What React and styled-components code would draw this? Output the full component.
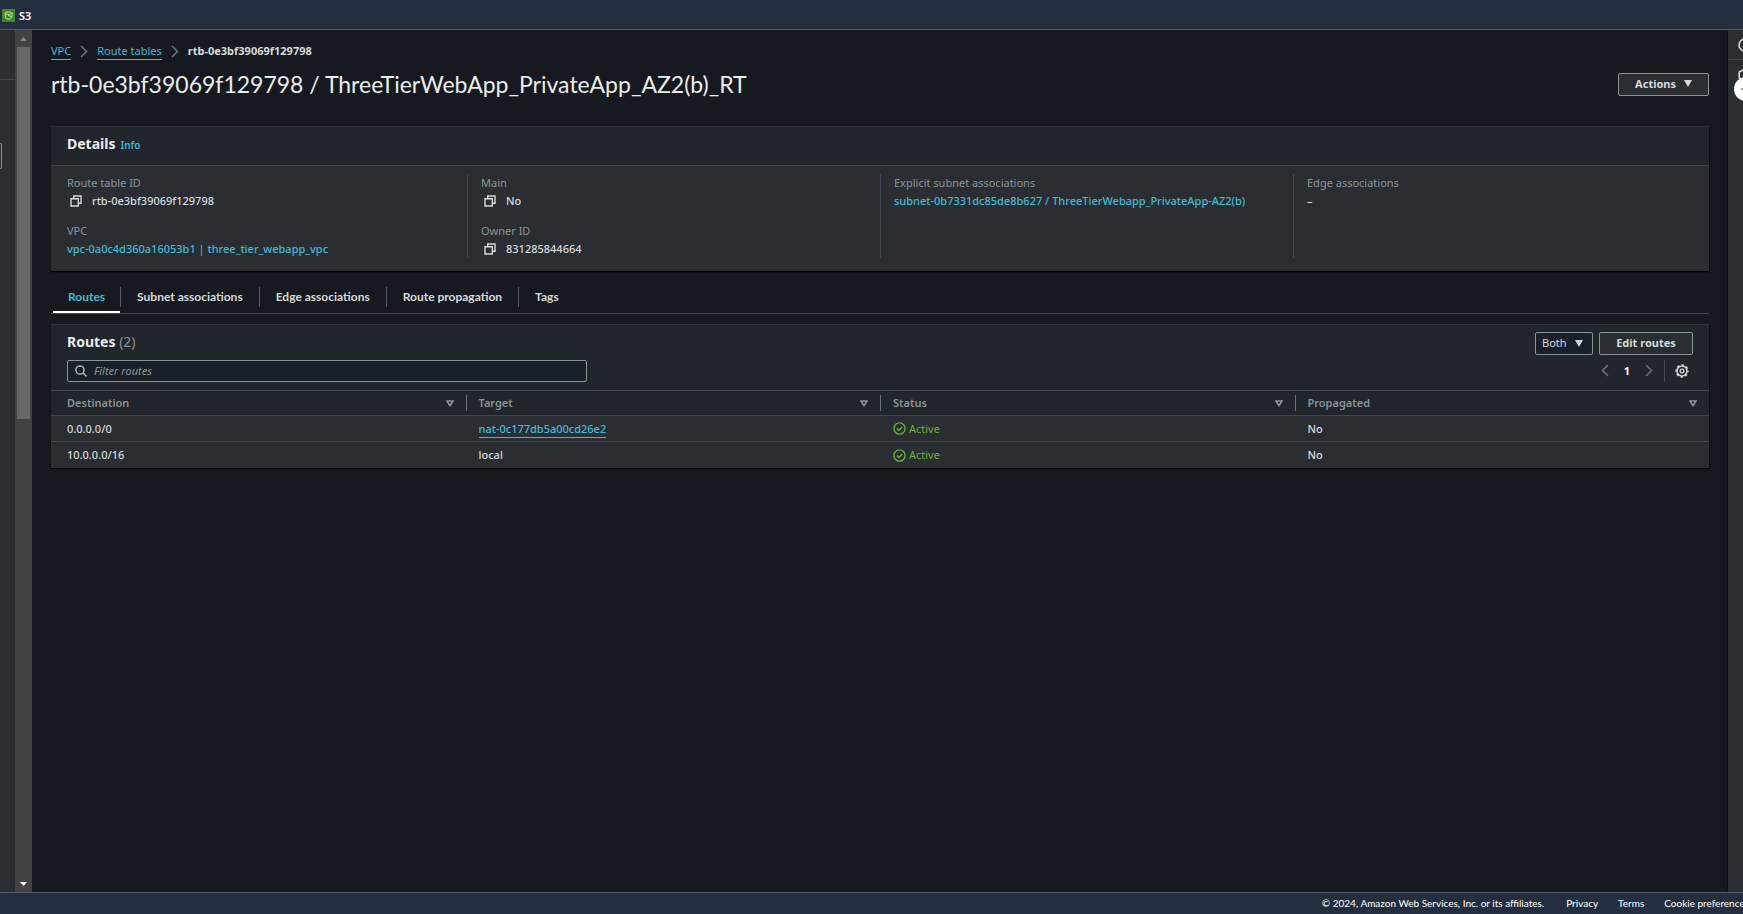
import React from 'react';
import styled, { createGlobalStyle, css } from 'styled-components';

const c = {
  bar: '#232f3e',
  barLine: '#545b64',
  page: '#16191f',
  head: '#21252c',
  body: '#2a2e33',
  line: '#414750',
  text: '#d5dbdb',
  strong: '#eaeded',
  muted: '#879596',
  link: '#44b9d6',
  green: '#6aaf35',
  field: '#1a2029',
};

const Global = createGlobalStyle`
  *, *::before, *::after { box-sizing: border-box; }
  body { margin: 0; background: ${c.page}; }
  body, button, input, select {
    font: 400 11px/18px 'Noto Sans', 'Open Sans', sans-serif;
    color: ${c.text};
  }
  button, h1, h2, dl, dd, dt, ul, ol { margin: 0; padding: 0; }
  button { cursor: pointer; }
  ul, ol { list-style: none; }
  svg { display: block; flex: none; }
`;

const Page = styled.div`
  display: flex;
  flex-direction: column;
  min-height: 100vh;
  overflow: hidden;
`;

const TopBar = styled.header`
  display: flex;
  align-items: center;
  height: 30px;
  padding: 2px 2px 0;
  background: ${c.bar};
  border-bottom: 1px solid ${c.barLine};
`;

const Favorite = styled.a`
  display: flex;
  align-items: center;
  gap: 4px;
  color: #fff;
  font-weight: 600;
  text-decoration: none;
`;

const Workspace = styled.div`
  display: flex;
  flex: 1;
`;

const SideNav = styled.nav`
  display: flex;
  flex-direction: column;
  align-items: flex-start;
  width: 15px;
  background: ${c.body};
`;

const SideNavHead = styled.div`
  width: 100%;
  height: 50px;
  border-bottom: 1px solid ${c.line};
`;

const SideNavField = styled.div`
  width: 2px;
  height: 26px;
  margin-top: 63px;
  border: solid ${c.muted};
  border-width: 1px 1px 1px 0;
  border-radius: 0 2px 2px 0;
`;

const ScrollTrack = styled.div`
  display: flex;
  flex-direction: column;
  align-items: center;
  width: 17px;
  background: #424242;
`;

const ScrollArrow = styled.span`
  display: flex;
  align-items: center;
  justify-content: center;
  height: 17px;
  color: ${(p) => (p.$active ? '#fff' : '#868686')};
`;

const ScrollThumb = styled.div`
  width: 13px;
  height: 372px;
  margin-bottom: auto;
  background: #686868;
`;

const Main = styled.main`
  flex: 1;
  min-width: 0;
  padding: 12px 18px 0 19px;
  border-right: 1px solid #0f1114;
`;

const Crumbs = styled.ol`
  display: flex;
  align-items: center;
  gap: 9px;
`;

const Crumb = styled.li`
  display: flex;
  align-items: center;
  gap: 9px;
  color: ${c.muted};
`;

const CrumbCurrent = styled.span`
  color: ${c.text};
  font-weight: 700;
`;

const Link = styled.a`
  color: ${c.link};
  text-decoration: none;
  ${(p) => p.$underline && css`
    display: inline-block;
    line-height: 16px;
    border-bottom: 1px solid currentColor;
  `}
`;

const TitleRow = styled.div`
  display: flex;
  align-items: center;
  justify-content: space-between;
  margin-top: 8px;
`;

const Title = styled.h1`
  color: ${c.strong};
  font: 400 23px/32px Lato, 'Noto Sans', sans-serif;
`;

const Button = styled.button`
  display: flex;
  align-items: center;
  gap: 8px;
  height: 23px;
  padding: 0 16px 1px;
  background: ${c.body};
  border: 1px solid ${c.muted};
  border-radius: 2px;
  font-weight: 700;
  line-height: 20px;
`;

const Panel = styled.section`
  border-top: 1px solid #2e3237;
  background: ${(p) => (p.$plain ? c.head : c.body)};
  box-shadow: 0 1px 1px #000, 1px 1px 1px #0f1216;
`;

const DetailsPanel = styled(Panel)`
  margin-top: 26px;
`;

const PanelHead = styled.div`
  display: flex;
  align-items: baseline;
  gap: 5px;
  height: 39px;
  padding: 7px 16px 0;
  background: ${c.head};
  border-bottom: 1px solid ${c.line};
`;

const Heading = styled.h2`
  color: ${c.strong};
  font-size: 14px;
  font-weight: 700;
  line-height: 20px;
`;

const Count = styled.span`
  color: ${c.muted};
  font-weight: 400;
`;

const InfoLink = styled(Link)`
  font-size: 10px;
  font-weight: 600;
`;

const DetailGrid = styled.div`
  display: grid;
  grid-template-columns: repeat(4, 1fr);
  padding: 8px 3px 13px;
`;

const DetailColumn = styled.dl`
  display: flex;
  flex-direction: column;
  gap: 12px;
  padding: 0 13px;
  & + & { border-left: 1px solid ${c.line}; }
`;

const DetailLabel = styled.dt`
  color: ${c.muted};
`;

const DetailValue = styled.dd`
  display: flex;
  align-items: center;
  gap: 10px;
  font-weight: 500;
`;

const CopyButton = styled.button`
  width: 15px;
  padding-left: 3px;
  border: 0;
  background: none;
`;

const Tabs = styled.div`
  display: flex;
  margin-top: 13px;
  padding-left: 2px;
  border-bottom: 1px solid ${c.line};
`;

const Tab = styled.button`
  height: 29px;
  padding: 0 0 2px;
  border: 0;
  border-bottom: 2px solid ${(p) => (p.$active ? '#fff' : 'transparent')};
  background: none;
  color: ${(p) => (p.$active ? c.link : c.text)};
  font: 700 12px/20px Lato, 'Noto Sans', sans-serif;
  span {
    display: block;
    padding: 0 15px;
  }
  &:not(:first-child) span {
    padding: 0 16px;
    border-left: 1px solid ${c.barLine};
  }
`;

const RoutesPanel = styled(Panel)`
  margin-top: 10px;
`;

const Toolbar = styled.div`
  display: flex;
  justify-content: space-between;
  align-items: flex-start;
  height: 65px;
  padding: 7px 16px 0;
`;

const FilterArea = styled.div`
  display: flex;
  flex-direction: column;
  gap: 8px;
  width: 32%;
`;

const Filter = styled.label`
  display: flex;
  align-items: center;
  gap: 7px;
  height: 22px;
  padding: 0 7px;
  background: ${c.field};
  border: 1px solid ${c.muted};
  border-radius: 2px;
  color: #aab7b8;
`;

const FilterInput = styled.input`
  flex: 1;
  min-width: 0;
  padding: 0;
  border: 0;
  outline: 0;
  background: none;
  &::placeholder { color: ${c.muted}; font-style: italic; opacity: 1; }
`;

const Controls = styled.div`
  display: flex;
  flex-direction: column;
  align-items: flex-end;
  gap: 4px;
`;

const ControlRow = styled.div`
  display: flex;
  gap: 6px;
`;

const SelectBox = styled.label`
  display: grid;
  grid-template-columns: 1fr 17px;
  align-items: center;
  width: 58px;
  height: 23px;
  background: ${c.field};
  border: 1px solid ${c.muted};
  border-radius: 2px;
  select {
    grid-area: 1 / 1 / 2 / 3;
    height: 21px;
    padding: 0 6px 2px;
    appearance: none;
    border: 0;
    background: none;
    line-height: 18px;
  }
  svg { grid-area: 1 / 2; pointer-events: none; }
`;

const EditButton = styled(Button)`
  width: 94px;
  padding: 0 0 1px;
  justify-content: center;
`;

const Pager = styled.div`
  display: flex;
  align-items: center;
  height: 23px;
`;

const IconButton = styled.button`
  display: flex;
  align-items: center;
  justify-content: center;
  width: 22px;
  height: 22px;
  border: 0;
  background: none;
  color: ${(p) => (p.$dim ? '#687078' : c.text)};
`;

const PageNumber = styled.button`
  width: 22px;
  border: 0;
  background: none;
  color: #fff;
  font-weight: 700;
`;

const Settings = styled.div`
  margin-left: 4px;
  padding-left: 6px;
  border-left: 1px solid ${c.line};
`;

const Table = styled.table`
  width: 100%;
  table-layout: fixed;
  border-collapse: separate;
  border-spacing: 0;
`;

const HeadCell = styled.th`
  height: 26px;
  padding: 0;
  border: solid ${c.line};
  border-width: 1px 0;
  color: ${c.muted};
  font-weight: 600;
  text-align: left;
`;

const HeadCellInner = styled.div`
  display: flex;
  align-items: center;
  justify-content: space-between;
  height: 16px;
  padding: 0 12px;
  line-height: 16px;
  th:first-child > & { padding-left: 16px; }
  th + th > & { border-left: 1px solid #687078; }
`;

const Row = styled.tr`
  background: ${c.body};
  &:not(:last-child) td { border-bottom: 1px solid ${c.line}; }
`;

const Cell = styled.td`
  height: 26px;
  padding: 0 13px;
  font-weight: 500;
  &:first-child { padding-left: 16px; }
`;

const Status = styled.span`
  display: flex;
  align-items: center;
  gap: 3px;
  color: ${c.green};
  font-weight: 400;
`;

const ToolRail = styled.aside`
  position: relative;
  width: 15px;
  overflow: hidden;
  background: ${c.body};
`;

const RailItem = styled.button`
  display: block;
  width: 36px;
  height: 30px;
  padding: 0 0 0 10px;
  border: 0;
  border-bottom: 1px solid ${(p) => (p.$line ? c.line : 'transparent')};
  background: none;
  color: ${c.text};
`;

const AssistantButton = styled.button`
  position: absolute;
  top: 47px;
  left: 6px;
  display: flex;
  align-items: center;
  width: 24px;
  height: 24px;
  padding-left: 6px;
  border: 0;
  border-radius: 50%;
  background: #fff;
  color: #8c4fb5;
`;

const Footer = styled.footer`
  display: flex;
  justify-content: flex-end;
  height: 22px;
  background: ${c.bar};
  border-top: 1px solid ${c.barLine};
  overflow: hidden;
`;

const FooterItems = styled.div`
  display: flex;
  gap: 20px;
  margin-right: -6px;
  color: #fff;
  font: 400 10px/20px Lato, 'Noto Sans', sans-serif;
  white-space: nowrap;
  a { color: inherit; text-decoration: none; }
  span { margin-right: 2px; }
`;

const S3Icon = () => (
  <svg width="13" height="13" viewBox="0 0 13 13" aria-hidden="true">
    <path d="M0 0h13v13H0z" fill="#3f8624" />
    <path d="M3 4.2 3.8 9.6Q6.3 11 8.8 9.6L9.1 8M3 4.2C3 2.6 9.6 2.6 9.6 4.2S3 5.8 3 4.2M6 6.4l4.5 1.4M9.5 4.3h1.6M9.2 6h1.9" fill="none" stroke="#cfe6c2" strokeWidth=".9" />
  </svg>
);

const Caret = ({ up, size = 7, height = 4 }) => (
  <svg width={size} height={height} viewBox="0 0 8 5" preserveAspectRatio="none" aria-hidden="true">
    <path d={up ? 'M0 5h8L4 0z' : 'M0 0h8L4 5z'} fill="currentColor" />
  </svg>
);

const Chevron = ({ left }) => (
  <svg width="8" height="13" viewBox="0 0 8 13" fill="none" stroke="#687078" strokeWidth="1.6" aria-hidden="true">
    <path d={left ? 'M7 1 1.5 6.5 7 12' : 'M1 1l5.5 5.5L1 12'} />
  </svg>
);

const CopyIcon = () => (
  <svg width="12" height="12" viewBox="0 0 12 12" fill="none" stroke={c.text} strokeWidth="1.4" aria-hidden="true">
    <path d="M1 3.7h7.3V11H1zM3.7 3.5V1H11v7.3H8.5" />
  </svg>
);

const SearchIcon = () => (
  <svg width="12" height="12" viewBox="0 0 12 12" fill="none" stroke="currentColor" strokeWidth="1.5" aria-hidden="true">
    <circle cx="5" cy="5" r="4.1" />
    <path d="m8 8 3.5 3.5" />
  </svg>
);

const SortIcon = () => (
  <svg width="8" height="7" viewBox="0 0 8 7" fill="none" stroke="currentColor" strokeWidth="1.6" aria-hidden="true">
    <path d="M1 1h6L4 5.6z" />
  </svg>
);

const CheckIcon = () => (
  <svg width="13" height="13" viewBox="0 0 13 13" fill="none" stroke="currentColor" strokeWidth="1.4" aria-hidden="true">
    <circle cx="6.5" cy="6.5" r="5.6" />
    <path d="m3.8 6.6 2 2 3.5-3.7" />
  </svg>
);

const GearIcon = () => (
  <svg width="14" height="14" viewBox="0 0 14 14" fill="none" stroke="currentColor" aria-hidden="true">
    <circle cx="7" cy="7" r="5" strokeWidth="1.5" />
    <circle cx="7" cy="7" r="6" strokeWidth="1.4" strokeDasharray="2.4 2.312" strokeDashoffset="1.2" />
    <circle cx="7" cy="7" r="1.9" strokeWidth="1.3" />
  </svg>
);

const InfoIcon = () => (
  <svg width="14" height="14" viewBox="0 0 14 14" fill="none" stroke="currentColor" strokeWidth="1.6" aria-hidden="true">
    <circle cx="7" cy="7" r="6" />
    <path d="M7 6.2v4M7 3.4v1.4" />
  </svg>
);

const HexIcon = () => (
  <svg width="14" height="14" viewBox="0 0 14 14" fill="none" stroke="currentColor" strokeWidth="1.6" aria-hidden="true">
    <path d="M7 1 1.2 4v6L7 13l5.8-3V4z" />
  </svg>
);

const SparkIcon = () => (
  <svg width="12" height="12" viewBox="0 0 12 12" fill="currentColor" aria-hidden="true">
    <path d="M0 6c4-.8 5.2-2 6-6 .8 4 2 5.2 6 6-4 .8-5.2 2-6 6-.8-4-2-5.2-6-6z" />
  </svg>
);

const details = [
  [
    { label: 'Route table ID', value: 'rtb-0e3bf39069f129798', copy: true },
    { label: 'VPC', value: 'vpc-0a0c4d360a16053b1 | three_tier_webapp_vpc', link: true },
  ],
  [
    { label: 'Main', value: 'No', copy: true },
    { label: 'Owner ID', value: '831285844664', copy: true },
  ],
  [
    {
      label: 'Explicit subnet associations',
      value: 'subnet-0b7331dc85de8b627 / ThreeTierWebapp_PrivateApp-AZ2(b)',
      link: true,
    },
  ],
  [{ label: 'Edge associations', value: '–' }],
];

const tabs = ['Routes', 'Subnet associations', 'Edge associations', 'Route propagation', 'Tags'];

const routes = [
  { destination: '0.0.0.0/0', target: 'nat-0c177db5a00cd26e2', link: true, status: 'Active', propagated: 'No' },
  { destination: '10.0.0.0/16', target: 'local', status: 'Active', propagated: 'No' },
];

const Detail = ({ label, value, copy, link }) => (
  <div>
    <DetailLabel>{label}</DetailLabel>
    <DetailValue>
      {copy && (
        <CopyButton aria-label={`Copy ${label}`}>
          <CopyIcon />
        </CopyButton>
      )}
      {link ? <Link href="#">{value}</Link> : value}
    </DetailValue>
  </div>
);

export default function App() {
  return (
    <Page>
      <Global />
      <TopBar>
        <Favorite href="#">
          <S3Icon />
          S3
        </Favorite>
      </TopBar>

      <Workspace>
        <SideNav aria-label="Services">
          <SideNavHead />
          <SideNavField />
        </SideNav>
        <ScrollTrack aria-hidden="true">
          <ScrollArrow><Caret up /></ScrollArrow>
          <ScrollThumb />
          <ScrollArrow $active><Caret /></ScrollArrow>
        </ScrollTrack>

        <Main>
          <Crumbs>
            <Crumb><Link $underline href="#">VPC</Link><Chevron /></Crumb>
            <Crumb><Link $underline href="#">Route tables</Link><Chevron /></Crumb>
            <Crumb><CrumbCurrent>rtb-0e3bf39069f129798</CrumbCurrent></Crumb>
          </Crumbs>

          <TitleRow>
            <Title>rtb-0e3bf39069f129798 / ThreeTierWebApp_PrivateApp_AZ2(b)_RT</Title>
            <Button>
              Actions
              <Caret size={8} height={7} />
            </Button>
          </TitleRow>

          <DetailsPanel>
            <PanelHead>
              <Heading>Details</Heading>
              <InfoLink href="#">Info</InfoLink>
            </PanelHead>
            <DetailGrid>
              {details.map((items) => (
                <DetailColumn key={items[0].label}>
                  {items.map((item) => <Detail key={item.label} {...item} />)}
                </DetailColumn>
              ))}
            </DetailGrid>
          </DetailsPanel>

          <Tabs role="tablist">
            {tabs.map((name, i) => (
              <Tab key={name} role="tab" aria-selected={i === 0} $active={i === 0}>
                <span>{name}</span>
              </Tab>
            ))}
          </Tabs>

          <RoutesPanel $plain>
            <Toolbar>
              <FilterArea>
                <Heading>Routes <Count>(2)</Count></Heading>
                <Filter>
                  <SearchIcon />
                  <FilterInput type="text" placeholder="Filter routes" aria-label="Filter routes" />
                </Filter>
              </FilterArea>
              <Controls>
                <ControlRow>
                  <SelectBox>
                    <select aria-label="Route view" defaultValue="Both">
                      <option>Both</option>
                    </select>
                    <Caret size={8} height={7} />
                  </SelectBox>
                  <EditButton>Edit routes</EditButton>
                </ControlRow>
                <Pager>
                  <IconButton $dim aria-label="Previous page"><Chevron left /></IconButton>
                  <PageNumber>1</PageNumber>
                  <IconButton $dim aria-label="Next page"><Chevron /></IconButton>
                  <Settings>
                    <IconButton aria-label="Preferences"><GearIcon /></IconButton>
                  </Settings>
                </Pager>
              </Controls>
            </Toolbar>
            <Table>
              <thead>
                <tr>
                  {['Destination', 'Target', 'Status', 'Propagated'].map((name) => (
                    <HeadCell key={name} scope="col">
                      <HeadCellInner>
                        {name}
                        <SortIcon />
                      </HeadCellInner>
                    </HeadCell>
                  ))}
                </tr>
              </thead>
              <tbody>
                {routes.map((r) => (
                  <Row key={r.destination}>
                    <Cell>{r.destination}</Cell>
                    <Cell>{r.link ? <Link $underline href="#">{r.target}</Link> : r.target}</Cell>
                    <Cell><Status><CheckIcon />{r.status}</Status></Cell>
                    <Cell>{r.propagated}</Cell>
                  </Row>
                ))}
              </tbody>
            </Table>
          </RoutesPanel>
        </Main>

        <ToolRail>
          <RailItem $line aria-label="Info"><InfoIcon /></RailItem>
          <RailItem aria-label="Diagnostics"><HexIcon /></RailItem>
          <AssistantButton aria-label="Assistant"><SparkIcon /></AssistantButton>
        </ToolRail>
      </Workspace>

      <Footer>
        <FooterItems>
          <span>© 2024, Amazon Web Services, Inc. or its affiliates.</span>
          <a href="#">Privacy</a>
          <a href="#">Terms</a>
          <a href="#">Cookie preferences</a>
        </FooterItems>
      </Footer>
    </Page>
  );
}
